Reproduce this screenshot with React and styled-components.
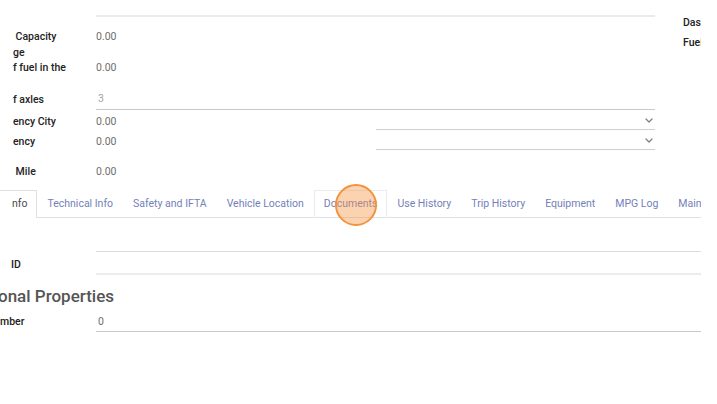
import React from "react";
import styled, { createGlobalStyle } from "styled-components";

const GlobalStyle = createGlobalStyle`
  body {
    margin: 0;
    background: #fff;
    font-family: Roboto, "Noto Sans", sans-serif;
  }
`;

const Page = styled.div`
  position: relative;
  width: 717px;
  height: 404px;
  overflow: hidden;
`;

const Sheet = styled.div`
  width: 701px;
  overflow: hidden;
  font-size: 10.5px;
  line-height: 15px;
`;

const TopGroup = styled.div`
  display: flex;
`;

const LeftGroup = styled.div`
  width: 655px;
  flex: none;
`;

const RightGroup = styled.div`
  margin-left: 28px;
  padding-top: 12px;
  white-space: nowrap;
`;

const TopLine = styled.div`
  margin-left: 96px;
  height: 15px;
  border-bottom: 2px solid #ebebeb;
`;

const FieldRow = styled.div`
  display: grid;
  grid-template-columns: 96px 1fr;
  align-items: center;
  min-height: 20px;
  margin-top: ${(p) => p.$gap || 0}px;
`;

const Label = styled.div`
  padding-left: ${(p) => (p.$indent === undefined ? 13 : p.$indent)}px;
  color: #222;
  font-weight: 500;
  white-space: pre;
  overflow: hidden;
  align-self: ${(p) => p.$align || "center"};
`;

const SideLabel = styled.div`
  height: 20px;
  display: flex;
  align-items: center;
  color: #222;
  font-weight: 500;
`;

const Value = styled.div`
  color: #6e6e6e;
  align-self: ${(p) => p.$align || "center"};
`;

const ValueWithUnit = styled.div`
  display: flex;
  align-items: center;
  height: 20px;
  align-self: start;
`;

const UnitValue = styled.div`
  width: 280px;
  color: #6e6e6e;
`;

const Select = styled.div`
  flex: 1;
  height: 19px;
  align-self: flex-start;
  box-sizing: border-box;
  border-bottom: 1px solid #cfcfcf;
  display: flex;
  align-items: center;
  justify-content: flex-end;
  padding-right: 2px;
  color: #7a7a7a;
`;

const Input = styled.div`
  height: ${(p) => p.$height || 20}px;
  display: flex;
  align-items: center;
  padding-left: 2px;
  color: ${(p) => (p.$muted ? "#a3a3a3" : "#6e6e6e")};
  border-bottom: ${(p) => p.$line || "1px solid #c9c9c9"};
`;

const TabNav = styled.div`
  display: flex;
  align-items: flex-start;
  height: 27px;
  margin-top: 9px;
  border-bottom: 1px solid #dee2e6;
  white-space: nowrap;
`;

const Tab = styled.div`
  flex: none;
  height: 28px;
  box-sizing: border-box;
  margin-bottom: -1px;
  padding: 0 9px 2px ${(p) => (p.$first ? 12 : 9)}px;
  margin-left: ${(p) => (p.$first ? -1 : 0)}px;
  display: flex;
  align-items: center;
  border: 1px solid transparent;
  border-bottom: none;
  color: ${(p) => (p.$active ? "#4a4a4a" : "#7481b9")};
  background: ${(p) => (p.$active ? "#fff" : "transparent")};
  border-color: ${(p) =>
    p.$active ? "#dee2e6" : p.$hover ? "#e9ecef" : "transparent"};
`;

const Heading = styled.div`
  margin-top: 11px;
  font-size: 17px;
  line-height: 20px;
  font-weight: 500;
  color: #555;
  white-space: pre;
  text-indent: -2px;
`;

const ClickMark = styled.div`
  position: absolute;
  left: 335px;
  top: 184px;
  width: 42px;
  height: 42px;
  box-sizing: border-box;
  border-radius: 50%;
  border: 2px solid #f5923e;
  background: rgba(247, 145, 61, 0.4);
`;

const Chevron = () => (
  <svg width="8" height="5" viewBox="0 0 8 5" fill="none">
    <path d="M1 1l3 3 3-3" stroke="#808080" strokeWidth="1.3" strokeLinecap="round" strokeLinejoin="round" />
  </svg>
);

const tabs = [
  "Technical Info",
  "Safety and IFTA",
  "Vehicle Location",
  "Documents",
  "Use History",
  "Trip History",
  "Equipment",
  "MPG Log",
  "Maintenance",
];

export default function App() {
  return (
    <Page>
      <GlobalStyle />
      <Sheet>
        <TopGroup>
          <LeftGroup>
            <TopLine />
            <FieldRow $gap={9}>
              <Label>{" Capacity"}</Label>
              <Value>0.00</Value>
            </FieldRow>
            <FieldRow $gap={-1}>
              <Label>
                {"ge"}
                <br />
                {"f fuel in the"}
              </Label>
              <Value $align="end">0.00</Value>
            </FieldRow>
            <FieldRow $gap={13}>
              <Label>{"f axles"}</Label>
              <Input $muted $height={21}>3</Input>
            </FieldRow>
            <FieldRow $gap={1}>
              <Label>{"ency City"}</Label>
              <ValueWithUnit>
                <UnitValue>0.00</UnitValue>
                <Select>
                  <Chevron />
                </Select>
              </ValueWithUnit>
            </FieldRow>
            <FieldRow>
              <Label>{"ency"}</Label>
              <ValueWithUnit>
                <UnitValue>0.00</UnitValue>
                <Select>
                  <Chevron />
                </Select>
              </ValueWithUnit>
            </FieldRow>
            <FieldRow $gap={10}>
              <Label>{" Mile"}</Label>
              <Value>0.00</Value>
            </FieldRow>
          </LeftGroup>
          <RightGroup>
            <SideLabel>Dashboard</SideLabel>
            <SideLabel>Fuel Type</SideLabel>
          </RightGroup>
        </TopGroup>

        <TabNav>
          <Tab $first $active>
            nfo
          </Tab>
          {tabs.map((t) => (
            <Tab key={t} $hover={t === "Documents"}>
              {t}
            </Tab>
          ))}
        </TabNav>

        <FieldRow $gap={13}>
          <Label />
          <Input $line="1px solid #dcdcdc" />
        </FieldRow>
        <FieldRow $gap={1}>
          <Label $indent={11}>ID</Label>
          <Input $line="2px solid #ececec" />
        </FieldRow>
        <Heading>onal Properties</Heading>
        <FieldRow $gap={5}>
          <Label $indent={0}>{"mber"}</Label>
          <Input>0</Input>
        </FieldRow>
      </Sheet>
      <ClickMark />
    </Page>
  );
}
